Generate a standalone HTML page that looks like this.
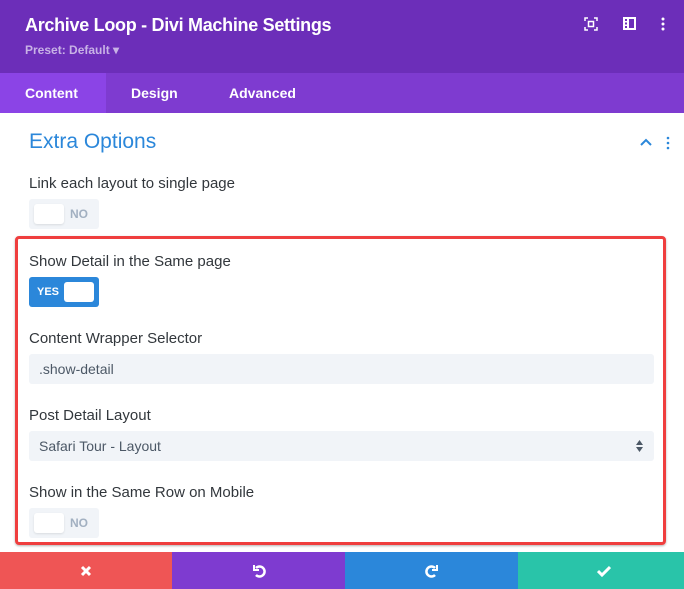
<!DOCTYPE html>
<html><head><meta charset="utf-8"><style>
*{box-sizing:border-box;margin:0;padding:0}
body{width:684px;height:589px;overflow:hidden;background:#fff;font-family:"Liberation Sans",sans-serif;position:relative}
.abs{position:absolute}
.hdr{left:0;top:0;width:684px;height:73px;background:#6c2eb9}
.title{left:25px;top:15px;color:#fff;font-size:18px;font-weight:bold;letter-spacing:-0.3px}
.preset{left:25px;top:43px;color:#c8b2e6;font-size:12px;font-weight:bold}
.tabs{left:0;top:73px;width:684px;height:40px;background:#7e3bd0}
.tab{top:73px;height:40px;line-height:40px;color:#fff;font-size:14px;font-weight:bold}
.lbl{left:29px;color:#32373c;font-size:15px}
.tog{width:70px;height:30px;border-radius:3px}
.knob{position:absolute;width:30px;height:20px;background:#fff;border-radius:3px;top:5px}
.inp{left:29px;width:625px;height:30px;background:#f1f4f8;border-radius:3px;font-size:14px;color:#4c5866;padding-left:10px;line-height:30px}
.foot{top:552px;height:37px}
</style></head><body>
<div class="abs hdr"></div>
<div class="abs title">Archive Loop - Divi Machine Settings</div>
<div class="abs preset">Preset: Default ▾</div>
<svg class="abs" style="left:584px;top:17px" width="14" height="14" viewBox="0 0 14 14" fill="none" stroke="#fff" stroke-width="1.5"><path d="M1 4V1h3M10 1h3v3M13 10v3h-3M4 13H1v-3"/><rect x="4.5" y="4.5" width="5" height="5"/></svg>
<svg class="abs" style="left:623px;top:17px" width="13" height="13" viewBox="0 0 13 13"><rect x="0" y="0" width="13" height="13" fill="#fff"/><rect x="2" y="2" width="2" height="2" fill="#6c2eb9"/><rect x="2" y="5.5" width="2" height="2" fill="#6c2eb9"/><rect x="2" y="9" width="2" height="2" fill="#6c2eb9"/><rect x="6" y="2" width="5" height="9" fill="#6c2eb9"/></svg>
<svg class="abs" style="left:661px;top:17px" width="4" height="14"><circle cx="2" cy="2" r="1.5" fill="#fff"/><circle cx="2" cy="7" r="1.5" fill="#fff"/><circle cx="2" cy="12" r="1.5" fill="#fff"/></svg>
<div class="abs tabs"></div>
<div class="abs" style="left:0;top:73px;width:106px;height:40px;background:#8b44e6"></div>
<div class="abs tab" style="left:25px">Content</div>
<div class="abs tab" style="left:131px">Design</div>
<div class="abs tab" style="left:229px">Advanced</div>
<div class="abs" style="left:29px;top:130px;color:#2b87da;font-size:21px">Extra Options</div>
<svg class="abs" style="left:640px;top:138px" width="12" height="8"><path d="M1 7l5-5 5 5" fill="none" stroke="#2b87da" stroke-width="2"/></svg>
<svg class="abs" style="left:666px;top:136px" width="4" height="14"><circle cx="2" cy="2" r="1.3" fill="#2b87da"/><circle cx="2" cy="7" r="1.3" fill="#2b87da"/><circle cx="2" cy="12" r="1.3" fill="#2b87da"/></svg>
<div class="abs lbl" style="top:175px">Link each layout to single page</div>
<div class="abs tog" style="left:29px;top:199px;background:#f1f4f8"><div class="knob" style="left:5px;box-shadow:0 1px 2px rgba(0,0,0,.1)"></div><span style="position:absolute;left:41px;top:8px;font-size:12px;font-weight:bold;color:#a2b0c1">NO</span></div>
<div class="abs" style="left:15px;top:236px;width:651px;height:309px;border:3px solid #ef3e3e;border-radius:4px;box-shadow:0 1px 2px rgba(0,0,0,.3)"></div>
<div class="abs lbl" style="top:253px">Show Detail in the Same page</div>
<div class="abs tog" style="left:29px;top:277px;background:#2b87da"><span style="position:absolute;left:8px;top:9px;font-size:11px;font-weight:bold;color:#fff">YES</span><div class="knob" style="left:35px"></div></div>
<div class="abs lbl" style="top:330px">Content Wrapper Selector</div>
<div class="abs inp" style="top:354px">.show-detail</div>
<div class="abs lbl" style="top:407px">Post Detail Layout</div>
<div class="abs inp" style="top:431px">Safari Tour - Layout</div>
<svg class="abs" style="left:636px;top:440px" width="7" height="12"><path d="M0 5L3.5 0 7 5zM0 7l3.5 5L7 7z" fill="#4c5866"/></svg>
<div class="abs lbl" style="top:484px">Show in the Same Row on Mobile</div>
<div class="abs tog" style="left:29px;top:508px;background:#f1f4f8"><div class="knob" style="left:5px;box-shadow:0 1px 2px rgba(0,0,0,.1)"></div><span style="position:absolute;left:41px;top:8px;font-size:12px;font-weight:bold;color:#a2b0c1">NO</span></div>
<div class="abs foot" style="left:0;width:172px;background:#ef5555"></div>
<div class="abs foot" style="left:172px;width:173px;background:#7e3bd0"></div>
<div class="abs foot" style="left:345px;width:173px;background:#2b87da"></div>
<div class="abs foot" style="left:518px;width:166px;background:#29c4a9"></div>
<svg class="abs" style="left:80px;top:565px" width="12" height="12"><path d="M2 2l8 8M10 2l-8 8" stroke="#fff" stroke-width="3"/></svg>
<svg class="abs" style="left:252px;top:564px" width="14" height="14" fill="none" stroke="#fff" stroke-width="2.5"><path d="M4 4a5 5 0 1 1 0 7"/><path d="M2 1v5h5" stroke-width="2"/></svg>
<svg class="abs" style="left:425px;top:564px" width="14" height="14" fill="none" stroke="#fff" stroke-width="2.5"><path d="M10 4a5 5 0 1 0 0 7"/><path d="M12 1v5H7" stroke-width="2"/></svg>
<svg class="abs" style="left:597px;top:565px" width="14" height="12"><path d="M1 6l4 4 8-8" fill="none" stroke="#fff" stroke-width="3"/></svg>
</body></html>
